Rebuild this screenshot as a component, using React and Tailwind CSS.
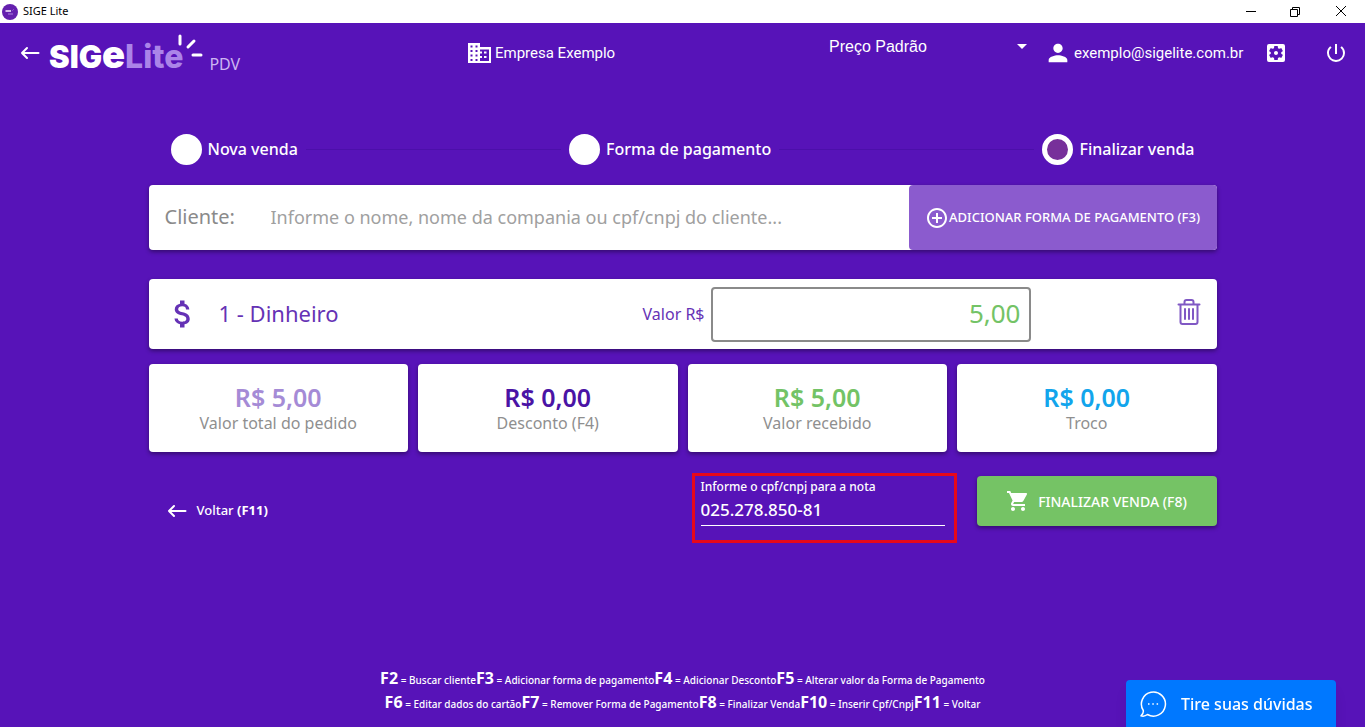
import { useState } from 'react';
import {
  MdAddCircleOutline,
  MdArrowDropDown,
  MdAttachMoney,
  MdPerson,
  MdPowerSettingsNew,
  MdSettingsApplications,
  MdShoppingCart,
} from 'react-icons/md';

const steps = [
  { label: 'Nova venda', current: false },
  { label: 'Forma de pagamento', current: false },
  { label: 'Finalizar venda', current: true },
];

const totals = [
  { value: 'R$ 5,00', label: 'Valor total do pedido', color: 'text-[#a58bd6]' },
  { value: 'R$ 0,00', label: 'Desconto (F4)', color: 'text-[#4a13a5]' },
  { value: 'R$ 5,00', label: 'Valor recebido', color: 'text-[#73c366]' },
  { value: 'R$ 0,00', label: 'Troco', color: 'text-[#12a5ec]' },
];

const shortcuts = [
  [
    ['F2', 'Buscar cliente'],
    ['F3', 'Adicionar forma de pagamento'],
    ['F4', 'Adicionar Desconto'],
    ['F5', 'Alterar valor da Forma de Pagamento'],
  ],
  [
    ['F6', 'Editar dados do cartão'],
    ['F7', 'Remover Forma de Pagamento'],
    ['F8', 'Finalizar Venda'],
    ['F10', 'Inserir Cpf/Cnpj'],
    ['F11', 'Voltar'],
  ],
];

const BackArrow = () => (
  <svg className="h-4 w-5 shrink-0" viewBox="0 0 20 16" fill="none" stroke="currentColor" strokeWidth="2" strokeLinecap="round" strokeLinejoin="round">
    <path d="M18.5 8H2M7 3L2 8l5 5" />
  </svg>
);

const BuildingIcon = () => (
  <svg className="h-5 w-6" viewBox="0 0 24 20" fill="currentColor" fillRule="evenodd">
    <path d="M0 0h12v4h11v16H0zM2.500 2.500v2h2v-2zM7.500 2.500v2h2v-2zM2.500 7v2h2V7zM7.500 7v2h2V7zM2.500 11.500v2h2v-2zM7.500 11.500v2h2v-2zM2.500 16v2h2v-2zM7.500 16v2h2v-2zM12 6.500v2h2v2h-2v2.500h2v2h-2V18h9V6.500zM16 8.500h2.500v2H16zM16 13h2.500v2H16z" />
  </svg>
);

const TrashIcon = () => (
  <svg className="mb-1 h-[26px] w-6" viewBox="0 0 24 26" fill="none" stroke="currentColor" strokeWidth="2" strokeLinecap="round" strokeLinejoin="round">
    <path d="M1.500 5.500h21M3.500 5.500V23a2 2 0 0 0 2 2h13a2 2 0 0 0 2-2V5.500M7.500 5V3a2 2 0 0 1 2-2h5a2 2 0 0 1 2 2v2" />
    <path d="M8 10v10M12 10v10M16 10v10" />
  </svg>
);

const TitleBar = () => (
  <div className="flex h-[23px] items-center justify-between bg-white pl-0.5 pr-[18px] text-black">
    <div className="flex items-center gap-[5px]">
      <svg className="h-4 w-4" viewBox="0 0 16 16">
        <circle cx="8" cy="8" r="8" fill="#6420ae" />
        <path d="M3.500 7h5.500" stroke="#f1e5fb" strokeWidth="1.600" />
        <path d="M6 10h5M10.500 6.500l1-1" stroke="#ae82df" strokeWidth="1" />
      </svg>
      <span className="font-['Noto_Sans',sans-serif] text-[11px]">SIGE Lite</span>
    </div>
    <div className="flex items-center gap-[33px]">
      <button aria-label="Minimizar">
        <svg className="h-3 w-3" viewBox="0 0 12 12" stroke="currentColor"><path d="M1 5.500h10" /></svg>
      </button>
      <button aria-label="Restaurar">
        <svg className="h-3 w-3" viewBox="0 0 12 12" fill="none" stroke="currentColor">
          <path d="M.5 3.500h7v7h-7zM2.500 3.500v-2h7v7h-2" />
        </svg>
      </button>
      <button aria-label="Fechar">
        <svg className="h-3 w-3" viewBox="0 0 12 12" stroke="currentColor"><path d="M1 0l10 10M11 0L1 10" /></svg>
      </button>
    </div>
  </div>
);

const Header = () => (
  <header className="grid h-[60px] grid-cols-[448fr_361fr_219fr_300fr] items-center pl-5 pr-[17px]">
    <div className="flex items-center gap-[9px]">
      <button aria-label="Voltar">
        <BackArrow />
      </button>
      <div className="flex items-center font-['Inter',sans-serif] whitespace-nowrap">
        <div className="flex items-baseline pt-1 leading-9">
          <span className="text-[31px] font-black">SIG</span>
          <span className="text-[38px] font-black">e</span>
          <span className="text-[32px] font-extrabold text-[#ab84e8]">Lite</span>
        </div>
        <svg className="-ml-2 mb-3 h-7 w-7" viewBox="0 0 28 28" fill="none" stroke="currentColor" strokeWidth="3" strokeLinecap="round">
          <path d="M5 3v8M13 14l6-6M18 22h8" />
        </svg>
        <span className="ml-1.5 mt-[22px] font-['Noto_Sans',sans-serif] text-base text-[#cdb5f2]">PDV</span>
      </div>
    </div>
    <div className="flex items-center gap-[3px]">
      <BuildingIcon />
      <span className="font-['Roboto',sans-serif] text-[15px]">Empresa Exemplo</span>
    </div>
    <div className="relative mb-3.5 mr-[18px]">
      <select aria-label="Tabela de preço" className="w-full appearance-none bg-transparent font-['Liberation_Sans',sans-serif] text-base outline-none">
        <option>Preço Padrão</option>
      </select>
      <MdArrowDropDown className="pointer-events-none absolute -right-1 top-0 h-6 w-6" />
    </div>
    <div className="flex items-center">
      <MdPerson className="-ml-1 h-7 w-7" />
      <span className="ml-0.5 font-['Roboto',sans-serif] text-[15px]">exemplo@sigelite.com.br</span>
      <button aria-label="Configurações" className="ml-auto mr-9">
        <MdSettingsApplications className="h-6 w-6" />
      </button>
      <button aria-label="Sair">
        <MdPowerSettingsNew className="h-6 w-6" />
      </button>
    </div>
  </header>
);

const Steps = () => (
  <ol className="flex items-center gap-2 px-[22px]">
    {steps.map((step, i) => (
      <li key={step.label} className={`flex items-center gap-1.5 ${i > 0 ? 'flex-auto' : ''}`}>
        {i > 0 && <span className="mr-0.5 h-px flex-1 bg-[#4c0faa]" />}
        <span className={`h-[31px] w-[31px] rounded-full border-5 border-white ${step.current ? 'bg-[#77309a]' : 'bg-white'}`} />
        <span className="pb-0.5 text-base font-medium">{step.label}</span>
      </li>
    ))}
  </ol>
);

export default function App() {
  const [customer, setCustomer] = useState('');
  const [amount, setAmount] = useState('5,00');
  const [taxId, setTaxId] = useState('025.278.850-81');

  return (
    <div className="flex min-h-screen flex-col bg-[#5713b8] font-['Noto_Sans',sans-serif] text-white">
      <TitleBar />
      <Header />

      <main className="mx-auto mt-[51px] w-full max-w-[1068px] flex-1">
        <Steps />

        {/* Cliente */}
        <div className="mt-5 flex h-[65px] rounded bg-white shadow-[0_2px_4px_rgba(0,0,0,0.4)]">
          <label htmlFor="customer" className="flex w-[122px] items-center pb-0.5 pl-4 text-xl text-[#8a8a8a]">
            Cliente:
          </label>
          <input
            id="customer"
            value={customer}
            onChange={(e) => setCustomer(e.target.value)}
            placeholder="Informe o nome, nome da compania ou cpf/cnpj do cliente..."
            className="min-w-0 flex-1 pb-0.5 text-lg text-[#8a8a8a] outline-none placeholder:text-[#a0a0a0]"
          />
          <button className="flex w-[308px] items-center justify-center rounded bg-[#8b5bce] text-[13px] font-medium">
            <MdAddCircleOutline className="h-6 w-6" />
            ADICIONAR FORMA DE PAGAMENTO (F3)
          </button>
        </div>

        {/* Pagamento */}
        <div className="mt-[29px] flex h-[70px] items-center rounded bg-white pr-4 text-[#6532b5] shadow-[0_2px_4px_rgba(0,0,0,0.4)]">
          <MdAttachMoney className="ml-4 h-9 w-9" />
          <span className="ml-[18px] flex-1 pb-0.5 text-[22px]">1 - Dinheiro</span>
          <label htmlFor="amount" className="mr-1.5 text-base">Valor R$</label>
          <input
            id="amount"
            value={amount}
            onChange={(e) => setAmount(e.target.value)}
            className="h-[55px] w-80 rounded border-2 border-[#8a8a8a] px-2 pb-0.5 text-right text-[26px] text-[#73c366] outline-none"
          />
          <button aria-label="Remover" className="ml-[146px] text-[#8058c4]">
            <TrashIcon />
          </button>
        </div>

        {/* Totais */}
        <div className="mt-[15px] grid grid-cols-4 gap-2.5">
          {totals.map((total) => (
            <div key={total.label} className="flex h-[88px] flex-col items-center justify-center rounded bg-white shadow-[0_2px_4px_rgba(0,0,0,0.4)]">
              <span className={`text-[25px] leading-[30px] font-semibold ${total.color}`}>{total.value}</span>
              <span className="text-base leading-[22px] text-[#8f8f8f]">{total.label}</span>
            </div>
          ))}
        </div>

        {/* Ações */}
        <div className="mt-[21px] flex items-start">
          <button className="ml-[18px] mt-7 flex items-center gap-2.5 text-[13px]">
            <BackArrow />
            <span className="font-medium">
              Voltar <b className="font-bold">(F11)</b>
            </span>
          </button>
          <div className="ml-auto h-[70px] w-[265px] border-3 border-[#e8081a] px-1.5 pt-[3px]">
            <label htmlFor="taxId" className="block text-[12px] leading-4 font-medium">
              Informe o cpf/cnpj para a nota
            </label>
            <input
              id="taxId"
              value={taxId}
              onChange={(e) => setTaxId(e.target.value)}
              className="h-[31px] w-[244px] border-b border-white pb-0.5 text-[17px] font-medium outline-none"
            />
          </div>
          <button className="ml-5 mt-[3px] flex h-[50px] w-60 items-center justify-center gap-2 rounded bg-[#75c365] text-[14px] font-medium shadow-[0_2px_4px_rgba(0,0,0,0.4)]">
            <MdShoppingCart className="h-6 w-6" />
            FINALIZAR VENDA (F8)
          </button>
        </div>
      </main>

      <footer className="pb-[13px] text-center text-[10px] leading-6 font-medium">
        {shortcuts.map((row) => (
          <p key={row[0][0]} className="h-6">
            {row.map(([key, action]) => (
              <span key={key}>
                <b className="text-base leading-6 font-bold">{key}</b> = {action}
              </span>
            ))}
          </p>
        ))}
      </footer>

      <button className="fixed right-[29px] bottom-0 flex h-[47px] w-[210px] items-center gap-3.5 rounded-t bg-[#0078ff] pl-[13px] text-base font-medium shadow-lg">
        <svg className="h-7 w-7" viewBox="0 0 28 28" fill="none" stroke="currentColor" strokeWidth="1.500" strokeLinejoin="round">
          <path d="M4.300 20.500A12 12 0 1 1 8.500 24.500C6.500 26 3.500 26.300 2 25.800c1.700-1.300 2.600-3 2.300-5.300z" />
          <path d="M9 14h1.500M13.300 14h1.500M17.600 14h1.500" />
        </svg>
        Tire suas dúvidas
      </button>
    </div>
  );
}
